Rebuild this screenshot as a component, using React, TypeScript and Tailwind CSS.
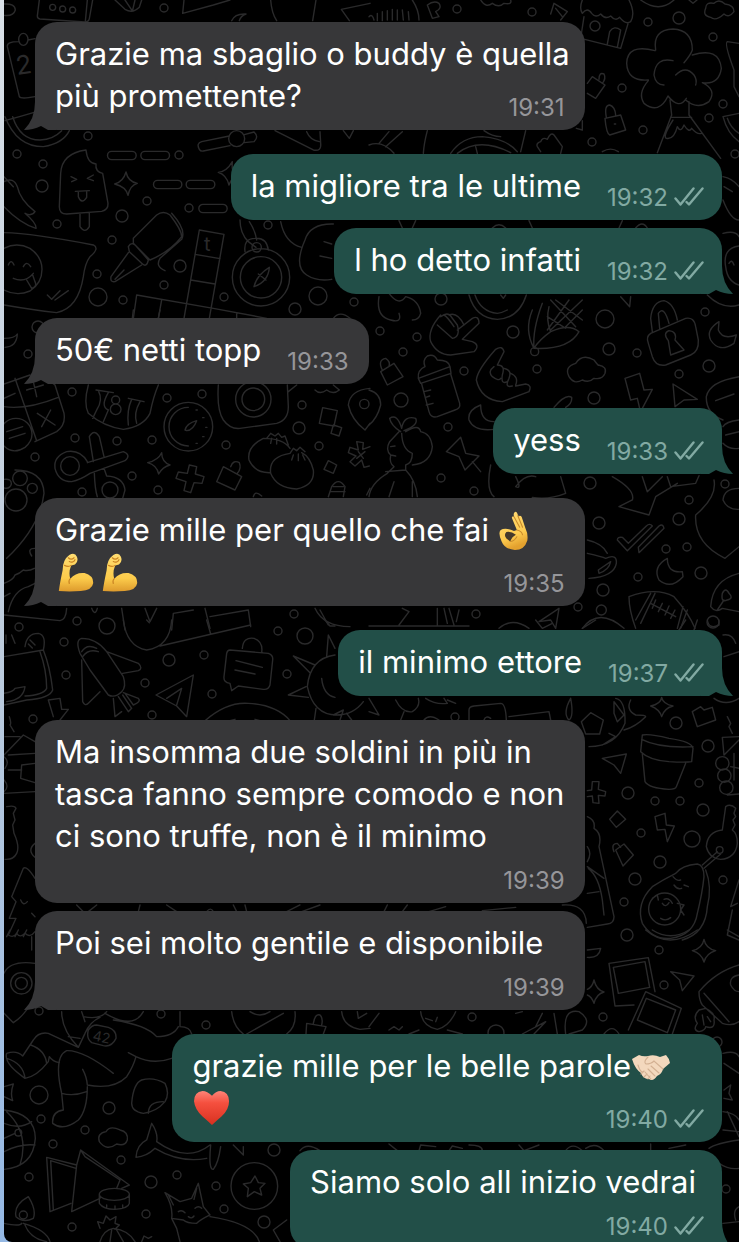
import type { ReactNode } from "react"

type MessageProps = {
    time: string
    mine?: boolean
    tail?: boolean
    layout?: "inline" | "corner" | "below"
    className?: string
    children: ReactNode
}

const Ticks = () => (
    <svg
        viewBox="0 0 30 19"
        className="w-[30px] h-[19px] mb-1"
        fill="none"
        stroke="currentColor"
        strokeWidth="2.4"
        strokeLinecap="round"
        strokeLinejoin="round"
        role="img"
        aria-label="Delivered"
    >
        <path d="M1.5 11.5 6.500 17.500 19.500 1.500M12.500 15 15 17.500 28.500 1.500" />
    </svg>
)

const Tail = ({ mine }: { mine?: boolean }) => (
    <svg
        viewBox="0 0 32 28"
        className={`absolute bottom-0 w-8 h-7 ${mine ? "-right-[11px] -scale-x-100 text-[#224f48]" : "-left-[11px] text-[#373739]"}`}
        fill="currentColor"
        aria-hidden="true"
    >
        <path d="M11 0Q11 17 0 28 9 28 17 24L24 28H32V0Z" />
    </svg>
)

const Message = ({
    time,
    mine,
    tail,
    layout = "inline",
    className = "",
    children
}: MessageProps) => {
    const layouts = {
        inline: "flex items-end gap-[26px]",
        corner: "grid grid-cols-1 w-full items-end",
        below: "flex flex-col gap-3"
    }
    return (
        <li
            className={`relative max-w-[80%] rounded-[22px] pl-5 pt-[11px] pb-[13px] text-white text-[31px] leading-[42px] ${mine ? "self-end pr-[18px] bg-[#224f48]" : "self-start pr-5 bg-[#373739]"} ${layouts[layout]} ${className}`}
        >
            {tail && <Tail mine={mine} />}
            <p
                className={`relative whitespace-nowrap ${layout === "corner" ? "col-start-1 row-start-1" : ""}`}
            >
                {children}
            </p>
            <div
                className={`relative flex items-center gap-1.5 self-end text-[24px] leading-6 -mb-[3px] ${layout === "corner" ? "col-start-1 row-start-1 justify-self-end" : ""} ${mine ? "text-[#82aaa3]" : "text-[#96969a]"}`}
            >
                <time>{time}</time>
                {mine && <Ticks />}
            </div>
        </li>
    )
}

const emojiClass = "inline-block -my-1"

const Flex = () => (
    <svg
        viewBox="0 0 40 42"
        className={`${emojiClass} align-[-6px] w-10 h-10 mr-1`}
        role="img"
        aria-label="flexed biceps"
    >
        <defs>
            <linearGradient id="arm" x1="0" y1="0" x2="0" y2="1">
                <stop offset="0" stopColor="#ffdd72" />
                <stop offset="0.65" stopColor="#fccb4b" />
                <stop offset="1" stopColor="#dd9a2c" />
            </linearGradient>
        </defs>
        <path
            d="M14 2Q20-1 22 4 24 9 20 12L16 13Q13 20 15 27 21 20 30 21 40 24 39 32 38 39 26 40 14 41 3 40 4 32 7 18 7 7 14 2Z"
            fill="url(#arm)"
        />
        <path
            d="M13 5Q16 8 19 5M14 9Q18 11 20 7M15 27Q13 29 14 32M9 13Q13 15 16 13"
            fill="none"
            stroke="#c98222"
            strokeWidth="1.2"
            strokeLinecap="round"
        />
    </svg>
)

const OkHand = () => (
    <svg
        viewBox="0 0 32 42"
        className={`${emojiClass} align-[-6px] w-8 h-10`}
        role="img"
        aria-label="ok hand"
    >
        <defs>
            <linearGradient id="ok" x1="0" y1="0" x2="0.3" y2="1">
                <stop offset="0" stopColor="#ffdb78" />
                <stop offset="0.7" stopColor="#fdcb50" />
                <stop offset="1" stopColor="#e3a12e" />
            </linearGradient>
        </defs>
        <path
            d="M17 1Q19 0 20 4L21 6Q22 4 24 6L28 18Q31 24 30 31 27 41 17 41 6 40 3 32-1 23 2 20 7 17 16 21L19 20 14 8Q13 5 16 6 15 2 17 1Z"
            fill="url(#ok)"
        />
        <path d="M8 22Q5 25 8 29L12 32Q14 27 18 25 13 21 8 22Z" fill="#463a2b" />
        <path
            d="M16 6 22 17M20 5 25 17M19 20Q24 21 25 25M12 32Q16 32 19 27"
            fill="none"
            stroke="#c88a2b"
            strokeWidth="1.1"
            strokeLinecap="round"
        />
    </svg>
)

const Handshake = () => (
    <svg
        viewBox="0 0 40 28"
        className={`${emojiClass} align-[-1px] w-10 h-7`}
        role="img"
        aria-label="handshake"
    >
        <path
            d="M1 5 8 1Q12 3 17 2 23 0 29 3L35 1Q38 4 39 9L32 15Q31 20 26 22 22 28 18 25 12 25 10 19 4 15 1 5Z"
            fill="#f3d8bd"
        />
        <path
            d="M17 3Q12 8 15 10 20 10 23 7L32 15M20 12 28 19M17 15 24 22M14 18 20 25M7 11Q9 18 12 18M13 17 10 20M16 20 13 23M19 22 17 25"
            fill="none"
            stroke="#d3b092"
            strokeWidth="1.1"
            strokeLinecap="round"
        />
    </svg>
)

const Heart = () => (
    <svg
        viewBox="0 0 40 38"
        className={`${emojiClass} align-[-3px] w-10 h-9`}
        role="img"
        aria-label="red heart"
    >
        <defs>
            <linearGradient id="heart" x1="0" y1="0" x2="0" y2="1">
                <stop offset="0" stopColor="#ff8478" />
                <stop offset="0.35" stopColor="#f5503f" />
                <stop offset="1" stopColor="#d8301f" />
            </linearGradient>
        </defs>
        <path
            d="M20 6Q15 1 10 1 1 2 1 12 2 21 10 28 17 34 20 37 23 34 30 28 38 21 38 12 38 2 29 1 24 1 20 6Z"
            fill="url(#heart)"
        />
    </svg>
)

// [x, y, radius]
const dots = [
    [164, 8, 4], [88, 136, 4], [17, 154, 4], [43, 164, 4], [42, 186, 6],
    [179, 155, 4], [147, 201, 4], [122, 216, 6], [189, 208, 4], [57, 224, 4],
    [112, 240, 4], [180, 266, 6], [97, 274, 4], [164, 285, 4], [98, 297, 9],
    [123, 300, 4], [224, 297, 4], [268, 225, 4], [318, 296, 9], [295, 309, 6],
    [354, 302, 4], [457, 9, 4], [532, 12, 4], [679, 18, 6], [648, 22, 4],
    [713, 37, 4], [622, 88, 4], [723, 104, 4], [709, 118, 4], [643, 130, 4],
    [592, 142, 4], [735, 154, 4], [441, 299, 6], [705, 312, 4], [595, 26, 5],
    [72, 392, 4], [167, 398, 4], [202, 394, 4], [302, 405, 4], [299, 428, 6],
    [319, 446, 4], [226, 445, 4], [152, 440, 4], [117, 441, 4], [75, 438, 4],
    [35, 457, 4], [132, 476, 4], [82, 492, 4], [158, 490, 4], [38, 327, 6],
    [28, 354, 4], [294, 614, 4], [77, 621, 4], [19, 627, 4], [107, 626, 8],
    [380, 331, 4], [417, 337, 4], [403, 352, 4], [464, 371, 4], [513, 332, 6],
    [537, 369, 4], [605, 319, 9], [609, 349, 6], [637, 353, 4], [679, 374, 4],
    [709, 366, 6], [594, 398, 6], [448, 427, 4], [441, 478, 4], [474, 491, 4],
    [401, 400, 7], [590, 483, 6], [599, 523, 6], [679, 519, 6], [689, 500, 4],
    [666, 549, 4], [687, 547, 4], [701, 573, 6], [638, 577, 4], [603, 590, 6],
    [578, 607, 4], [476, 614, 4], [713, 622, 6], [64, 642, 4], [66, 675, 4],
    [169, 660, 6], [204, 655, 4], [145, 683, 4], [212, 694, 4], [152, 715, 4],
    [278, 631, 4], [305, 636, 8], [287, 674, 4], [33, 719, 4], [676, 723, 6],
    [708, 746, 6], [699, 783, 4], [628, 793, 6], [655, 801, 4], [680, 801, 4],
    [703, 810, 6], [641, 833, 4], [692, 839, 8], [660, 862, 6], [635, 879, 6],
    [723, 880, 4], [624, 902, 4], [627, 935, 6], [455, 717, 4], [161, 1014, 4],
    [206, 1025, 4], [39, 1011, 4], [39, 1095, 9], [109, 1108, 6], [41, 1119, 4],
    [85, 1130, 4], [53, 1144, 4], [121, 1160, 4], [29, 1177, 4], [151, 1182, 6],
    [177, 1175, 4], [216, 1186, 4], [224, 1209, 4], [146, 1214, 4], [72, 1227, 4],
    [264, 1222, 6], [274, 1150, 6], [659, 950, 4], [664, 985, 4], [603, 1017, 4],
    [472, 1017, 4], [496, 1033, 8], [717, 1042, 5], [726, 1189, 4]
]

// each tile is drawn on a grid three times finer than the screen
const tiles = [
    {
        x: 0,
        y: 0,
        paths: [
            "M118 0 112 48Q112 56 120 57L255 66Q266 66 268 56L278 0M262 0 256 64M149 22a9 9 0 1 0 18 0a9 9 0 1 0-18 0M179 27a9 9 0 1 0 18 0a9 9 0 1 0-18 0M209 30a9 9 0 1 0 18 0a9 9 0 1 0-18 0",
            "M345 0 375 28Q398 42 418 22L425 0M375 0 398 34M405 0 398 30",
            "M552 0 548 40 640 15 690 0M812 0Q815 40 830 62M948 0 938 62M1110 10 1024 28 1048 62M695 62Q705 40 738 42 722 48 718 62",
            "M12 12Q45 10 46 30 40 50 12 46",
            "M55 125Q20 125 22 140L58 290Q62 298 105 290M84 118a14 18 0 1 0-28 0a14 18 0 1 0 28 0M84 120 105 116",
            "M15 350Q50 440 130 440 190 430 208 392M15 362Q60 350 110 335M38 350Q60 420 120 420 160 418 185 392",
            "M258 450Q185 460 182 520L178 620Q178 642 200 642L305 634Q325 630 324 610L308 520Q285 515 288 492 262 490 258 450ZM240 642V680Q255 702 268 680V640M213 530 230 538 215 545M280 525 262 535 280 542M226 574 268 572M235 574V590Q245 615 260 592V574",
            "M335 454H396a12 12 0 0 1 0 25H335a12 12 0 0 1 0-25ZM435 454H496a12 12 0 0 1 0 25H435a12 12 0 0 1 0-25ZM473 541H533a12 12 0 0 1 0 25H473a12 12 0 0 1 0-25ZM571 541H632a12 12 0 0 1 0 25H571a12 12 0 0 1 0-25ZM609 613H669a12 12 0 0 1 0 25H609a12 12 0 0 1 0-25Z",
            "M688 408 605 425Q588 430 598 448 602 455 610 453L690 437M734 416a24 24 0 1 0-48 0a24 24 0 1 0 48 0M733 404 762 396Q778 410 762 425L733 428",
            "M825 392 940 450Q965 455 962 430L960 395M920 395Q930 420 958 425M1030 392 1048 415 1060 392",
            "M378 516Q384 545 412 550 390 556 384 586 378 560 344 552 370 545 378 516ZM700 515Q695 510 697 485 680 515 655 517 680 525 687 555 692 540 700 535",
            "M12 545Q40 530 52 560 60 600 105 635 95 650 75 640 110 670 108 685 60 670 12 620M12 530 40 560",
            "M12 698Q100 700 280 735 300 745 270 770 255 790 250 830 235 925 170 938 100 930 12 915M12 745Q50 725 90 745 126 770 126 808 126 850 90 873 50 890 12 870M25 795Q33 775 42 795M70 800Q80 780 92 800M40 835Q75 850 100 820M80 840 95 865Q112 860 105 845L98 825M142 885 155 898 180 872M165 900 205 872",
            "M400 715 470 645Q490 630 510 645 545 690 545 710 510 755 450 780L400 730ZM385 740Q395 722 410 740L445 780Q440 805 425 790L388 755ZM385 758 333 830Q330 848 345 845L425 795M345 838 372 810M515 640Q560 690 545 718L480 775Q465 800 495 812",
            "M628 955 672 703 598 690 552 955M585 763 660 776M572 840 645 852M400 955 410 885 640 925 800 955M485 900 475 955M710 940V955",
            "M869 832a86 86 0 1 0-172 0a86 86 0 1 0 172 0M845 832a62 62 0 1 0-124 0a62 62 0 1 0 124 0M784 742a14 14 0 1 0-28 0a14 14 0 1 0 28 0M735 755Q730 715 765 715 800 712 805 750M762 860Q770 825 808 802 805 845 762 860ZM775 822 798 840M720 660Q720 700 745 725L768 742M748 665Q765 690 770 720",
            "M842 665Q855 730 905 742M1000 672Q930 670 915 720 880 800 920 825 950 845 995 838M972 725 995 732M960 768 995 775M1000 955Q1020 930 1050 955"
        ]
    },
    {
        x: 369,
        y: 0,
        paths: [
            "M130 0Q150 30 150 60M25 40V62M40 35V62M55 32V60M70 28V60M85 30V60M100 30 103 60M118 35 120 60M0 50Q10 40 15 60",
            "M175 15 190 55 210 50 200 35Q220 25 210 10 195 0 175 15ZM335 0Q350 25 370 10 390 25 405 10 430 15 425 0M545 42 555 10 595 35 575 60M560 25 580 50",
            "M640 0Q630 25 640 40 655 20 668 40 680 55 695 42 710 60 725 48 740 65 752 52 770 75 785 65 800 40 780 0M645 50 635 115 755 145 778 68M715 132 722 95Q735 75 755 90L745 142",
            "M860 150Q850 90 912 87 970 90 970 150 965 165 945 188M858 152Q775 130 773 190 775 245 838 240M970 165Q1050 140 1057 205 1050 255 1000 248 1045 270 1020 305 985 330 950 300M838 242Q805 280 825 310 870 345 897 288 930 330 952 295M912 182Q860 170 855 225 860 255 885 255M920 225Q950 195 975 225 985 240 980 255M903 300 908 345 865 458M960 305V345L1055 475M905 352H968M912 360Q880 410 892 415 915 420 925 380 935 400 945 375 960 400 968 385 985 405 998 400",
            "M655 250 670 230 708 255 680 295 655 280M690 238Q690 215 705 222 712 235 700 250M708 355 755 345 770 390 722 405Q712 400 708 355ZM712 352Q705 315 722 315 738 320 740 345M736 372H740",
            "M1110 130 1075 125Q1065 130 1095 210V260L1110 290M1110 425Q1075 400 1062 350L1110 340M1075 355Q1085 385 1110 400",
            "M1010 25Q1010 5 1035 10 1050-5 1068 12 1095 15 1095 35 1080 55 1065 42 1040 65 1025 52 1000 48 1010 25ZM815 0Q870 40 915 0M960 0 972 10 984 0M622 385 640 390V362",
            "M60 395 30 430M100 395 50 440M0 435Q40 420 75 460M175 392Q165 430 163 460M245 460Q280 410 340 410 410 415 445 455M265 460Q330 410 425 458M320 440 325 460M470 392 455 455M345 392Q370 410 395 410",
            "M515 455 505 440Q500 430 515 425 520 410 535 418 545 395 555 405L580 440 575 460M700 455Q725 440 748 455",
            "M1062 530Q1090 535 1110 560M1065 560 1090 575M1062 600Q1085 660 1110 660M1062 700Q1100 690 1110 710M1110 738Q1060 745 1070 800 1075 845 1110 855M1080 790Q1088 775 1095 795M1015 885Q1060 930 1110 915",
            "M90 662 100 684M140 662 130 684M370 684Q390 665 410 684M480 662 490 684M750 684 760 662M800 684Q820 660 835 684",
            "M30 890Q20 950 65 960 100 970 90 940M60 880Q90 920 110 890 150 900 155 940 150 960 130 960M300 885Q320 955 385 958 450 955 472 885M318 885Q335 935 385 940 400 938 415 930M395 885 403 895 410 885M755 890 782 920 785 890"
        ]
    },
    {
        x: 0,
        y: 310,
        paths: [
            "M12 85Q45 85 52 72 50 110 15 112",
            "M12 222 90 195M140 212Q155 215 165 225L192 310Q198 345 170 365L105 395M45 205 110 392M12 290Q80 300 175 262M12 265 45 250M112 310 165 345M152 300 125 350M80 240 130 225M100 215 110 260M96 373a48 48 0 1 0-96 0M12 408Q40 435 75 412 96 395 96 373M20 365 68 350M28 385 75 370",
            "M265 225Q250 280 265 310 310 350 370 358 430 350 450 310 460 260 475 225M288 240 340 248M385 265 432 275M295 242Q310 270 290 300L278 325M325 248Q300 290 325 300L310 335M395 268Q380 300 385 345M420 275Q400 310 410 340M359 270a12 12 0 1 0-24 0a12 12 0 1 0 24 0M363 298a16 16 0 1 0-32 0a16 16 0 1 0 32 0",
            "M638 350a73 73 0 1 0-146 0a73 73 0 1 0 146 0M565 292A58 58 0 1 0 565 408M555 360Q560 340 590 332 580 360 560 362ZM588 300H592M608 323H612M617 352H621M608 380H612M588 400H592",
            "M655 225Q650 300 670 330 690 358 720 355L830 340Q865 330 865 290L862 225M813 268a53 53 0 1 0-106 0a53 53 0 1 0 106 0M794 268a34 34 0 1 0-68 0a34 34 0 1 0 68 0M865 245 890 225",
            "M870 415Q850 385 790 385 740 410 747 450 765 490 812 488M800 385 812 370 825 378 835 370 845 382 855 378 865 405M815 385 812 400M830 385V402M870 430Q805 440 812 490 830 535 890 537 945 525 940 480 930 440 905 428M870 430 880 415 890 422 900 412 915 425M880 435 875 450M895 432V452M908 435 915 450",
            "M1110 235Q1050 240 1045 285 1055 330 1095 360L1110 340M1107 282a14 14 0 1 0-28 0a14 14 0 1 0 28 0M968 293 1012 302 1002 348 958 340ZM1000 345 1025 353 1017 378 993 370ZM945 240Q960 255 980 240 1000 255 1018 240L1000 225M985 452 1010 465 1000 490 972 478Z",
            "M1110 410 1088 418 1090 398 1070 395 1075 420 1050 412 1045 428 1068 438 1050 455 1065 468 1085 450 1092 472 1108 468M1070 445 1095 425M1075 425 1090 445",
            "M312 440 298 380Q282 355 268 380L280 455M262 458 370 425Q395 435 375 452L270 490M238 468a28 28 0 1 0-56 0a28 28 0 1 0 56 0M262 455Q240 418 200 425 160 440 165 475 175 515 215 515 240 510 270 490M283 490Q285 540 292 560M312 475 320 498Q370 500 375 540L368 565M354 540a24 24 0 1 0-48 0a24 24 0 1 0 48 0",
            "M485 428Q485 455 510 465 488 470 476 492 470 465 443 458 475 450 485 428ZM568 465 590 470 586 492 612 500 606 520 582 518 572 548 552 542 558 515 528 505 535 486 562 490ZM670 470 725 500 705 540 650 515ZM692 470Q700 448 718 458 725 475 712 490",
            "M985 560 995 530Q1015 500 1035 530L1030 560M990 545H1035M1000 530H1030M760 560Q765 540 785 558M1100 555 1110 535",
            "M81 570a33 33 0 1 0-66 0a33 33 0 1 0 66 0M82 505a22 22 0 1 0-44 0a22 22 0 1 0 44 0M112 535a15 15 0 1 0-30 0a15 15 0 1 0 30 0M12 508Q35 505 34 522 30 538 12 534M45 480Q130 480 132 550 120 650 20 745M105 715Q80 715 95 738",
            "M12 820Q40 810 45 795 60 790 70 780 85 785 103 775M25 905Q40 840 85 830L105 820M12 860 30 850",
            "M12 915 180 932Q198 930 200 895M275 895Q285 920 292 895M365 895 375 960M435 895 450 935 470 895M515 960 520 910 580 900M615 895 630 955M630 920 745 900 752 950M945 895Q970 950 1050 950M960 900 985 945M400 0 397 25M480 0 475 25"
        ]
    },
    {
        x: 369,
        y: 310,
        paths: [
            "M215 15Q175 60 185 95 205 135 245 135L315 125Q335 105 310 95L280 88 330 40Q330 15 310 25L265 60M215 20Q235 5 245 18L265 45Q275 80 250 85L205 45M240 15Q265 5 285 45M225 15Q235 20 255 50",
            "M385 165 405 125Q400 105 380 118 325 180 322 210 335 270 400 275L480 245Q490 225 470 222L440 228M375 170Q355 185 370 200 390 215 395 205M385 165Q410 165 400 195 395 225 415 215M405 175Q430 180 420 205 405 235 430 228M425 190Q450 200 440 225",
            "M148 205 243 170Q240 150 205 150 195 130 175 138 160 150 168 170 145 180 148 205L155 220 246 190 243 170M158 222 180 305Q185 325 205 320L258 300Q275 295 272 280L245 192M165 245 185 240M170 262 182 258M172 285 192 280",
            "M35 185 75 160 102 200 55 225ZM40 180Q25 150 50 145 65 155 60 168M0 240Q35 250 35 285 25 325 0 345",
            "M490 0Q465 60 495 115 600 120 630 65 600 40 545 65 510 90 495 115M520-20Q490 60 495 115M509 125a12 12 0 1 0-24 0a12 12 0 1 0 24 0M545-30 620 50M600-30 535 60M535 20 590 55M640 0 590 50M560-30 640 30M640-30 545 60M545 65Q530 30 540-10",
            "M600 200Q585 170 620 160 640 130 675 150 690 170 688 165 715 170 708 190 700 210 675 205 660 220 640 210 615 225 600 200Z",
            "M845 70 950 25Q975 20 980 50L988 90Q990 125 965 135L890 165Q860 170 850 140L838 100Q830 80 845 70ZM850 65 845 25Q850-25 885-28 915-20 925 30M872 55 868 10Q885-15 900 40M898 92Q880 70 900 62 925 65 918 90L945 120 905 135Z",
            "M1050 35Q1010 60 1025 90 1050 130 1095 100L1102 75Q1060 90 1048 60ZM820 295 850 238 825 240 812 190 768 205 785 270 805 265 812 295M912 222 985 268 945 270 918 290Z",
            "M1110 200Q1020 215 1012 260 1010 310 1062 330M1040 272 1095 252M1110 330Q1070 335 1062 350M1062 400Q1080 420 1110 415M1070 375 1110 365M555 292Q590 250 608 262 610 280 590 292M335 285Q295 300 300 330 315 365 375 358M335 285Q335 335 375 335",
            "M95 365Q65 345 62 325 85 310 98 355 105 315 140 325 150 345 105 362M90 365 62 395Q48 420 65 435 60 460 75 470L55 490Q5 520 0 560M98 370Q100 420 130 430 130 460 110 465V480M110 365Q150 340 155 365 185 370 190 410 185 460 130 465M50 485 110 480Q140 510 145 560M75 515 60 560M130 515V560M65 410 78 408M65 435 80 438",
            "M232 425 275 382 290 430 330 438 288 480 270 440ZM310 455 335 485",
            "M365 465Q350 540 375 560M440 500Q460 540 440 530 470 490 500 500M575 500 590 550Q540 570 490 562M730 500Q800 540 790 570L750 590 840 615 860 560 925 520M820 500 835 545 880 500M895 500 905 530 980 520 990 497",
            "M1080 522a12 12 0 1 0-24 0a12 12 0 1 0 24 0M1110 535Q1065 535 1062 570 1075 600 1110 598M1035 510Q1045 560 980 615 975 700 1068 745L1110 710M745 690 775 722 850 648Q842 638 832 648L778 700 760 682Q745 680 745 690ZM810 728 885 655Q882 640 870 648L808 712Z",
            "M655 690Q700 700 715 730M655 730Q700 740 710 745 745 730 742 760 735 800 660 805M688 780 725 755Q720 780 690 790ZM895 745Q850 770 870 810 905 840 942 800L940 785Q895 790 895 745Z",
            "M800 955Q780 900 780 860 860 830 915 860 960 910 978 955M800 930 845 850M815 940 858 850M845 880 920 920M860 870 850 895M880 880 868 905M900 888 888 915M918 900 905 925M935 955 955 900M925 955 942 890",
            "M1110 790Q1030 810 1025 890 1040 910 1060 895L1110 905M1060 850Q1070 830 1080 850 1095 865 1075 870 1055 880 1060 850M1045 900 1065 870",
            "M100 895 120 905 90 945M205 895V945M240 895 255 945M225 895 235 940M270 900 262 935M0 948H300M510 935 570 895 560 955 545 930ZM712 900a15 15 0 1 0-30 0a15 15 0 1 0 30 0M640 955Q690 890 765 955M390 955Q430 920 480 955"
        ]
    },
    {
        x: 0,
        y: 620,
        paths: [
            "M18 45V70M35 45 45 70M12 110 130 90Q150 140 158 210 150 235 80 240L12 255M75 80Q80 40 115 40 140 45 130 90M90 60 105 75M85 72 97 84M12 220Q40 215 45 205L75 200Q70 240 20 245M120 95Q140 150 140 205 130 225 75 228",
            "M240 100Q225 60 245 55 290 55 320 95L370 170Q380 200 365 215 345 235 325 225L270 150ZM245 95Q260 70 290 85M248 110Q265 85 295 95M320 95 415 130Q430 145 415 152L368 160M245 120 248 245Q255 260 265 250L300 215M340 235 345 290 365 275M355 230 385 275 395 265M370 218 415 235Q425 245 400 255L375 220M368 225 395 265",
            "M468 225 580 165 560 290 530 258ZM530 255 545 205 500 235",
            "M690 90 805 100Q820 105 818 120L810 195Q805 210 790 208L715 198 695 212 690 190Q670 188 672 170L680 100Q682 90 690 90ZM727 85Q730 50 762 55 790 65 785 98M708 122 787 142M705 150 765 162",
            "M180 300 205 268 185 268 180 235 145 240 160 290M12 405 70 345 105 365M15 350 60 350M25 405 105 400M105 430 65 435 62 475 105 488M12 520 105 515M25 450H65M12 410Q30 425 15 445M12 480Q30 500 12 515M28 290Q35 310 30 315L42 335",
            "M20 560Q45 555 48 565L40 580 45 600 38 615 42 640Q60 680 50 700 40 720 15 718M105 670Q80 690 105 712M615 302Q680 245 745 250 830 255 870 302M690 302 705 298M765 298 780 302",
            "M945 135 880 108 930 158M918 200 865 225 925 232M980 110 985 45 1005 85M1005 105Q930 115 922 200 940 285 1010 285 1060 285 1090 245M965 175Q970 225 1005 232M948 265 943 300M1000 285 1030 270 1020 300M1040 280 1055 300",
            "M370 0Q380 80 440 90 510 80 515 0M440 0 448 8M480 78 752 15M620 0 632 42M975 0 990 18H1005",
            "M105 775Q80 735 70 745L35 830 48 845 28 895H48L25 945Q40 955 50 940 60 955 75 940 90 955 105 935M62 840Q70 860 82 845M95 880 105 890",
            "M230 855 250 875M290 855 265 875M420 855 415 875M500 855 530 875M700 855 710 875M735 855 740 875M620 875Q632 860 640 875M860 875 900 855M905 875 960 855"
        ]
    },
    {
        x: 369,
        y: 620,
        paths: [
            "M500 0 520 25 550 10M640 25 680 0M930 30 950 0M975 30 985 0M1015 0Q1020 30 1050 15V0M1062 45Q1090 40 1100 70M1065 110 1110 95M1035 235Q1070 260 1110 235",
            "M0 235 30 285 0 275M80 240Q100 280 130 275 155 260 148 235M105 275 95 300M170 235Q200 255 235 250L225 235M235 240 260 250M300 300V270Q300 260 315 258L395 250Q410 250 412 300M345 300Q350 285 365 295M420 290 540 275 545 300M165 300Q180 280 210 300",
            "M605 235Q580 280 600 300 615 290 605 235M740 235Q770 240 768 310 740 380 660 380M665 278 703 300 692 342 650 342 637 305ZM735 245 765 285 745 305 735 280ZM700 375 740 350 720 340M785 240Q770 270 800 285 830 285 830 290 800 320 765 330",
            "M878 232Q882 252 912 258 885 265 878 290 872 268 845 258 875 252 878 232ZM970 275 995 260 1005 270 1030 262 1040 300 985 320ZM1075 290 1085 310 1080 320 1090 340M700 415 772 402 755 460 735 435Z",
            "M820 345 815 395Q840 420 900 425 950 428 968 425L972 385Q970 365 900 355 840 340 820 345ZM818 358Q870 385 972 380M820 402 828 485Q840 505 900 508 920 508 922 500L950 430",
            "M655 512 668 510 670 485H690L688 508 710 515 708 528 688 526 690 550 672 548 670 528 655 530M745 573 770 598 742 622 722 598ZM858 590 888 580 892 615 916 618 895 665 888 628 865 630Z",
            "M1110 350 1060 352 1065 405 1110 360M1080 430a20 20 0 1 0-40 0a20 20 0 1 0 40 0M1086 467a20 20 0 1 0-40 0a20 20 0 1 0 40 0M1092 503a20 20 0 1 0-40 0a20 20 0 1 0 40 0M1085 440 1110 445M1075 525 1110 522M1095 400V480",
            "M1060 630 1070 560Q1085 550 1100 565L1095 580 1100 590 1092 600 1098 615 1090 630M1060 630Q1015 635 1012 680 1020 715 1055 718 1100 715 1105 670 1105 640 1090 630M1062 690a10 10 0 1 0-20 0a10 10 0 1 0 20 0M1045 695 1000 735M1055 702 1005 745M740 690 765 672 793 705 762 738ZM735 695Q725 670 745 670L755 682",
            "M985 732Q940 735 920 760 880 780 850 800 800 850 820 910 850 960 905 955 975 945 985 880 1000 820 1005 770 1005 735 985 732ZM1010 750Q1030 800 1015 860 1010 940 940 960M935 867a48 48 0 1 0-96 0a48 48 0 1 0 96 0M880 850Q890 865 900 848M885 838Q900 832 910 850M875 895Q890 905 905 893M912 770Q925 785 935 780M915 795Q925 810 938 805M945 795 958 800M850 835 865 825 868 840M925 850 945 855 935 870 945 885",
            "M655 590Q680 600 675 625 700 640 690 680L735 890Q735 910 715 912L655 922M655 680Q670 700 655 725M658 745Q690 770 700 840L705 885M655 820 690 815M655 740 705 775M1110 780 1085 860 1105 850M1090 870 1075 945 1110 960",
            "M55 855 45 875M115 855 100 875M180 875 230 860M340 872 440 862M580 855Q650 850 652 910"
        ]
    },
    {
        x: 0,
        y: 930,
        paths: [
            "M20 20 30 0M45 20 55 0M70 20 80 0M95 20V60M12 130Q30 90 105 100M12 250 40 278Q70 260 100 210M96 160a32 32 0 1 0-64 0a32 32 0 1 0 64 0M82 160a18 18 0 1 0-36 0a18 18 0 1 0 36 0",
            "M185 245Q185 300 235 352L255 310Q270 275 300 262M205 320 240 325M235 352 145 310Q115 305 100 330L68 378Q50 360 20 370 10 400 75 445 110 440 145 395L148 380Q158 395 178 398M92 345Q135 360 140 400M20 385Q70 400 75 445M245 245 255 275M250 260Q300 270 320 245M290 285 325 292Q350 300 348 325 335 352 310 347L275 338Q258 325 265 300 275 285 290 285Z",
            "M315 250Q400 300 430 245M340 270Q440 285 470 320 520 320 535 290M540 245V290Q570 290 575 312M340 430Q250 360 200 362 160 380 185 490L190 540Q155 545 158 580 190 605 235 570 262 540 262 470M248 418Q260 440 262 465M185 490Q220 500 260 485M262 465Q340 480 380 440 400 410 408 380L385 368M408 380Q460 405 515 385",
            "M425 450Q460 440 495 460 510 490 495 515 470 545 430 550 395 545 395 520 400 460 425 450ZM445 550Q445 515 490 515M12 540Q105 550 106 625 100 710 12 718M12 580Q60 600 95 575M12 665Q60 640 105 645M20 545Q90 610 60 705M65 608a10 10 0 1 0-20 0a10 10 0 1 0 20 0M12 625 45 610M12 470 40 462Q30 490 38 512L12 500",
            "M298 635Q290 610 318 605 330 585 360 600 385 605 382 630 375 650 350 642 320 665 298 635ZM213 820 150 845 140 682 230 705 215 845 300 805M228 715 152 692 160 840M230 705 242 660 388 765 365 775M242 660 255 680 360 750 350 775",
            "M388 793a45 18 0 1 0-90 0a45 18 0 1 0 90 0M298 793V820Q310 838 345 838 385 835 388 820V793M320 825V835M345 828V836M368 825V834",
            "M48 860Q40 825 85 800 110 840 100 865 70 880 48 860ZM82 855a12 12 0 1 0-24 0a12 12 0 1 0 24 0M65 880Q60 890 12 880M70 880Q140 900 150 935M75 885Q90 925 140 935M300 935Q310 900 340 895 385 900 405 935M300 895 293 875 310 880 318 858 330 870 348 860 345 880 358 885 345 898M335 900 330 935M350 900 370 935M425 935 432 918 445 925 455 920",
            "M495 788 540 815 575 805 595 760 610 830 630 855Q600 870 590 880 560 880 550 870L515 865Q520 830 495 788ZM505 795 520 825M590 775 582 808M535 845Q545 838 555 848M585 835Q595 825 605 835M565 860Q575 868 582 858M515 865 530 895 540 935M630 860Q760 880 778 935",
            "M408 682Q410 645 440 630L455 580Q475 610 470 635 560 700 630 645M408 682Q440 680 465 655 540 700 620 685M632 645Q625 720 640 718 655 700 662 650M700 645 730 675V650M833 768a70 70 0 1 0-140 0a70 70 0 1 0 140 0M765 738 775 758 795 760 780 775 785 795 763 785 742 800 745 775 730 762 752 758ZM860 870 820 900 840 935",
            "M695 245Q700 290 730 312M740 312 850 250M885 245Q890 290 860 312M750 245Q780 265 810 245M918 312 920 280 978 290 970 312M940 280Q945 250 960 255 970 265 965 285M1025 245Q1030 290 1080 298L1110 295M1072 245 1075 265 1100 250M900 662Q920 635 960 662"
        ]
    },
    {
        x: 369,
        y: 930,
        paths: [
            "M858 185 838 83 720 100 738 228 795 225M733 112 828 95 842 172 748 190ZM778 300 830 185 937 235 910 312M832 205 920 240 895 308 805 270Z",
            "M1005 28Q1010 55 1040 62 1012 70 1005 96 998 70 970 62 1000 55 1005 28ZM675 150Q682 180 705 186 682 192 675 220 668 200 655 195M655 178Q670 172 675 150M655 60 695 55Q690 85 655 82M905 125 975 138 940 182 932 150Z",
            "M1110 105Q1040 125 990 185 990 210 1000 225L1060 280Q1090 290 1110 275M1110 135Q1080 140 1085 165 1095 185 1110 185M1005 190 1080 275M990 240Q970 260 985 280 970 300 990 305 1010 300 1010 290 1040 300 1035 270 1040 250 1010 235ZM1000 255 1005 285M1015 260 1025 275M830 0Q900 60 985 0M850 0Q905 35 960 0M1075 0 1110 20",
            "M155 245Q160 290 205 298 240 290 260 245M170 265 190 272M205 262 200 275M460 312 530 275 495 312M500 290 520 250M555 250 565 312M590 312Q580 235 630 245 670 270 640 300L600 312M0 290 30 250M60 300 75 290 90 300 100 290M705 312Q730 280 750 312M120 312 150 300M235 300 280 312M440 250 460 245",
            "M1062 370Q1100 360 1110 380M1065 400 1110 430M1065 480 1085 465 1080 490 1090 510 1065 505M1062 545Q1100 550 1110 570M1062 600 1110 605M1110 630Q1040 640 1020 655M1050 700Q1080 720 1110 715M1075 545 1110 620M1062 880 1110 875M1110 830Q1090 840 1100 870",
            "M60 642 85 662M150 662 155 645 200 650M240 662 250 648 280 655M300 645Q340 645 340 662M450 645 465 662 510 645M590 662Q610 635 640 662M650 655Q680 635 705 662M845 642V662M900 655 950 645"
        ]
    }
]

const Wallpaper = () => (
    <svg
        viewBox="0 0 739 1242"
        preserveAspectRatio="xMinYMin slice"
        className="absolute inset-0 w-full h-full"
        fill="none"
        stroke="#2a2a2b"
        strokeLinecap="round"
        strokeLinejoin="round"
        aria-hidden="true"
    >
        {dots.map(([x, y, r]) => (
            <circle key={`${x}-${y}`} cx={x} cy={y} r={r} strokeWidth="1.4" />
        ))}
        {tiles.map((tile) => (
            <g
                key={`${tile.x}-${tile.y}`}
                transform={`translate(${tile.x} ${tile.y}) scale(0.33333)`}
                strokeWidth="4.2"
            >
                {tile.paths.map((d) => (
                    <path key={d} d={d} />
                ))}
            </g>
        ))}
        <g
            fill="#2a2a2b"
            stroke="none"
            className="font-['Inter','Liberation_Sans',sans-serif]"
        >
            <text x="17" y="75" fontSize="26" transform="rotate(-8 17 75)">
                2
            </text>
            <text x="204" y="251" fontSize="20">
                t
            </text>
            <text x="92" y="1040" fontSize="14" transform="rotate(12 92 1040)">
                42
            </text>
        </g>
    </svg>
)

const App = () => {
    return (
        <main className="h-screen overflow-hidden pl-1 bg-linear-to-b from-[#d9e0e7] via-[#bfcddd] to-[#94b8e4] font-['Inter','Liberation_Sans',sans-serif]">
            <div className="relative h-full overflow-hidden rounded-bl-lg bg-black">
                <div className="absolute inset-y-0 -left-1 right-0">
                    <Wallpaper />
                </div>
                <ul className="relative flex flex-col pl-[31px] pr-[17px] pt-[22px]">
                    <Message time="19:31" layout="corner" tail>
                        Grazie ma sbaglio o buddy è quella
                        <br />
                        più promettente?
                    </Message>
                    <Message time="19:32" mine className="mt-6">
                        la migliore tra le ultime
                    </Message>
                    <Message time="19:32" mine tail className="mt-2">
                        l ho detto infatti
                    </Message>
                    <Message time="19:33" tail className="mt-6">
                        50€ netti topp
                    </Message>
                    <Message time="19:33" mine tail className="mt-6">
                        yess
                    </Message>
                    <Message time="19:35" layout="corner" tail className="mt-6">
                        Grazie mille per quello che fai <OkHand />
                        <br />
                        <Flex />
                        <Flex />
                    </Message>
                    <Message time="19:37" mine tail className="mt-6">
                        il minimo ettore
                    </Message>
                    <Message time="19:39" layout="below" className="mt-6 w-full">
                        Ma insomma due soldini in più in
                        <br />
                        tasca fanno sempre comodo e non
                        <br />
                        ci sono truffe, non è il minimo
                    </Message>
                    <Message time="19:39" layout="below" tail className="mt-2 w-full">
                        Poi sei molto gentile e disponibile
                    </Message>
                    <Message time="19:40" mine layout="corner" className="mt-6">
                        grazie mille per le belle parole
                        <Handshake />
                        <br />
                        <Heart />
                    </Message>
                    <Message time="19:40" mine tail layout="below" className="mt-2">
                        <span className="pr-2">Siamo solo all inizio vedrai</span>
                    </Message>
                </ul>
            </div>
        </main>
    )
}

export default App
